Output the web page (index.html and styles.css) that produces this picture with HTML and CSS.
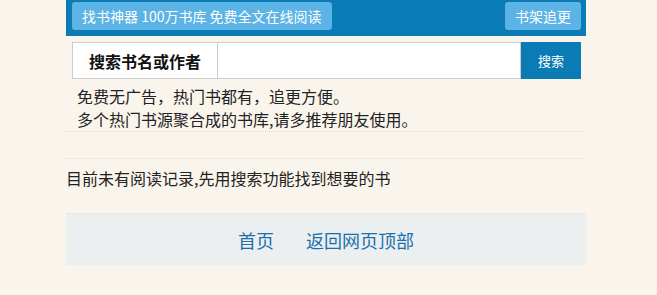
FILE: index.html
```html
<!DOCTYPE html>
<html lang="zh-CN">
<head>
  <meta charset="UTF-8" />
  <meta name="viewport" content="width=device-width, initial-scale=1" />
  <title>找书神器</title>
  <link rel="stylesheet" href="styles.css">
</head>
<body>
  <div class="wrap">
    <div class="top-bar">
      <a class="top-btn" href="#">找书神器 100万书库 免费全文在线阅读</a>
      <a class="top-btn" href="#">书架追更</a>
    </div>
    <form class="search-row">
      <label class="search-label" for="kw">搜索书名或作者</label>
      <input type="text" id="kw" class="search-input" />
      <button type="submit" class="search-btn">搜索</button>
    </form>
    <div class="intro">
      <p>免费无广告，热门书都有，追更方便。</p>
      <p>多个热门书源聚合成的书库,请多推荐朋友使用。</p>
    </div>
    <div class="history">目前未有阅读记录,先用搜索功能找到想要的书</div>
    <div class="footer">
      <a href="#">首页</a>
      <a href="#">返回网页顶部</a>
    </div>
  </div>
</body>
</html>
```

FILE: styles.css
```css
body {
  margin: 0;
  padding-right: 5px;
  background-color: #faf5ec;
  font-family: "Noto Sans CJK SC", "Noto Sans", sans-serif;
  color: #222;
}
.wrap {
  width: 520px;
  margin: 0 auto;
}
.top-bar {
  background-color: #0b7bb6;
  height: 36px;
  padding: 2px 5px 0 6px;
  box-sizing: border-box;
  display: flex;
  justify-content: space-between;
  align-items: flex-start;
}
.top-btn {
  display: block;
  background-color: #5cb3e6;
  color: #fff;
  text-decoration: none;
  font-size: 14px;
  line-height: 28px;
  padding: 0 10px;
  border-radius: 3px;
}
.search-row {
  display: flex;
  margin: 6px 5px 0 6px;
  height: 37px;
}
.search-label {
  width: 146px;
  box-sizing: border-box;
  border: 1px solid #ccc;
  background-color: #fff;
  font-weight: 700;
  font-size: 16px;
  display: flex;
  align-items: center;
  justify-content: center;
  color: #111;
}
.search-input {
  flex: 1;
  border: 1px solid #ccc;
  border-left: none;
  margin: 0;
  outline: none;
  font-size: 15px;
}
.search-btn {
  width: 60px;
  border: none;
  background-color: #0b7bb6;
  color: #fff;
  font-family: inherit;
  font-size: 13px;
  margin: 0;
  cursor: pointer;
}
.intro {
  padding: 6px 0 0 11px;
  border-bottom: 1px dotted #ddd;
  font-size: 16px;
}
.intro p {
  margin: 0;
  line-height: 23px;
}
.history {
  border-top: 1px dotted #ddd;
  margin-top: 26px;
  padding: 8px 0 24px;
  font-size: 16px;
  line-height: 22px;
  border-bottom: 1px dotted #e6e3dc;
}
.footer {
  background-color: #ebeff0;
  height: 51px;
  display: flex;
  justify-content: center;
  align-items: center;
  gap: 32px;
  font-size: 18px;
}
.footer a {
  color: #1b6fae;
  text-decoration: none;
}
```
